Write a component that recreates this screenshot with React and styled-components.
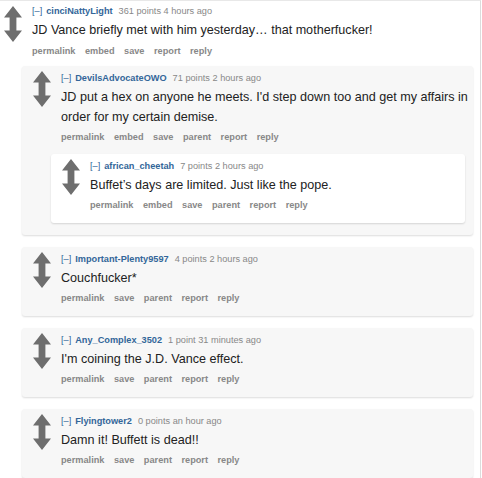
import styled, { createGlobalStyle } from "styled-components";

const GlobalStyle = createGlobalStyle`
    html, body {
        margin: 0;
        padding: 0;
        background: #fff;
        font-family: "Liberation Sans", Arial, sans-serif;
    }
`;

const Thread = styled.div`
    width: 480px;
    height: 477px;
    overflow: hidden;
    border-top: 1px solid #e8e8e8;
    border-right: 1px solid #dcdcdc;
`;

const Box = styled.div`
    padding: ${p => (p.$top ? "4px 0 0 4px" : "6px 0 11px 11px")};
    background: ${p => p.$bg || "transparent"};
    border-radius: ${p => (p.$top ? "0" : "3px")};
    box-shadow: ${p => (p.$top ? "none" : "0 1px 2px rgba(0, 0, 0, 0.14)")};

    & + & {
        margin-top: 12px;
    }
`;

const Entry = styled.div`
    display: flex;
    align-items: flex-start;
    gap: 10px;
`;

const Votes = styled.div`
    flex: 0 0 18px;
    width: 18px;
    height: 36px;
    margin-top: ${p => (p.$top ? "1px" : "-1px")};
`;

const Content = styled.div`
    flex: 1;
    min-width: 0;
`;

const Tagline = styled.p`
    margin: 0;
    font-size: 9.2px;
    line-height: 12px;
    color: #888;
    white-space: nowrap;
`;

const Expand = styled.span`
    color: #369;
    margin-right: 4px;
`;

const Author = styled.span`
    color: #369;
    font-weight: bold;
    margin-right: 6px;
`;

const Text = styled.p`
    margin: 3px 0 0;
    font-size: 12.6px;
    line-height: 20px;
    color: #222;
`;

const Buttons = styled.ul`
    display: flex;
    gap: 9.5px;
    margin: ${p => (p.$top ? "5px" : "4px")} 0 0;
    padding: 0;
    list-style: none;
    font-size: 9.2px;
    line-height: 13px;
    font-weight: bold;
    color: #888;
`;

const Children = styled.div`
    margin: ${p => (p.$top ? "8px 7px 0" : "10px 8px 1px")} 18px;
`;

const UpDown = () => (
    <svg width="18" height="36" viewBox="0 0 18 36">
        <path
            d="M9 0 L18 11.5 H12.4 V24.5 H18 L9 36 L0 24.5 H5.6 V11.5 H0 Z"
            fill="#6e6e6e"
        />
    </svg>
);

const Comment = ({ author, points, age, text, buttons, bg, top, children }) => (
    <Box $bg={bg} $top={top}>
        <Entry>
            <Votes $top={top}>
                <UpDown />
            </Votes>
            <Content>
                <Tagline>
                    <Expand>[–]</Expand>
                    <Author>{author}</Author>
                    {points} {age}
                </Tagline>
                <Text>{text}</Text>
                <Buttons $top={top}>
                    {buttons.map(b => (
                        <li key={b}>{b}</li>
                    ))}
                </Buttons>
            </Content>
        </Entry>
        {children && <Children $top={top}>{children}</Children>}
    </Box>
);

const full = ["permalink", "embed", "save", "parent", "report", "reply"];
const short = ["permalink", "save", "parent", "report", "reply"];

const App = () => (
    <>
        <GlobalStyle />
        <Thread>
            <Comment
                top
                author="cinciNattyLight"
                points="361 points"
                age="4 hours ago"
                text="JD Vance briefly met with him yesterday… that motherfucker!"
                buttons={["permalink", "embed", "save", "report", "reply"]}
            >
                <Comment
                    bg="#f7f7f7"
                    author="DevilsAdvocateOWO"
                    points="71 points"
                    age="2 hours ago"
                    text="JD put a hex on anyone he meets. I'd step down too and get my affairs in order for my certain demise."
                    buttons={full}
                >
                    <Comment
                        bg="#fff"
                        author="african_cheetah"
                        points="7 points"
                        age="2 hours ago"
                        text="Buffet’s days are limited. Just like the pope."
                        buttons={full}
                    />
                </Comment>
                <Comment
                    bg="#f7f7f7"
                    author="Important-Plenty9597"
                    points="4 points"
                    age="2 hours ago"
                    text="Couchfucker*"
                    buttons={short}
                />
                <Comment
                    bg="#f7f7f7"
                    author="Any_Complex_3502"
                    points="1 point"
                    age="31 minutes ago"
                    text="I'm coining the J.D. Vance effect."
                    buttons={short}
                />
                <Comment
                    bg="#f7f7f7"
                    author="Flyingtower2"
                    points="0 points"
                    age="an hour ago"
                    text="Damn it! Buffett is dead!!"
                    buttons={short}
                />
            </Comment>
        </Thread>
    </>
);

export default App;
